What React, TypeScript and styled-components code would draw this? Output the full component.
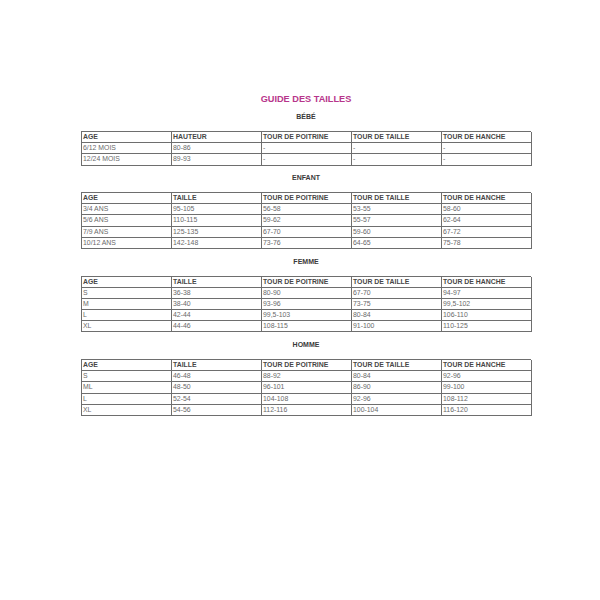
import React from "react";
import styled, { createGlobalStyle } from "styled-components";

const GlobalStyle = createGlobalStyle`
  html, body {
    margin: 0;
    padding: 0;
    background: #ffffff;
  }
  body {
    font-family: "Liberation Sans", Arial, sans-serif;
  }
`;

const Page = styled.main`
  width: 450px;
  margin-left: 81px;
  padding-top: 92px;
  display: flex;
  flex-direction: column;
  gap: 6.5px;
`;

const Title = styled.h1`
  margin: 0 0 -1.5px;
  height: 14px;
  line-height: 14px;
  font-size: 9.2px;
  font-weight: bold;
  text-align: center;
  color: #b7358b;
`;

const Section = styled.section`
  display: flex;
  flex-direction: column;
  gap: 8px;
`;

const Label = styled.h2`
  margin: 0;
  height: 12px;
  line-height: 12px;
  font-size: 7px;
  font-weight: bold;
  text-align: center;
  color: #3a3a3a;
`;

const Grid = styled.div`
  display: grid;
  grid-template-columns: repeat(5, 90px);
  grid-auto-rows: 11.2px;
  border-top: 1px solid #6e6e6e;
  border-left: 1px solid #6e6e6e;
`;

const Cell = styled.div<{ $head?: boolean }>`
  box-sizing: border-box;
  border-right: 1px solid #6e6e6e;
  border-bottom: 1px solid #6e6e6e;
  padding: 0 1px;
  font-size: 6.9px;
  line-height: 10.2px;
  white-space: nowrap;
  overflow: hidden;
  font-weight: ${(p) => (p.$head ? "bold" : "normal")};
  color: ${(p) => (p.$head ? "#474747" : "#6a6a6a")};
`;

type Table = { title: string; first: string; rows: string[][] };

const tables: Table[] = [
  {
    title: "BÉBÉ",
    first: "HAUTEUR",
    rows: [
      ["6/12 MOIS", "80-86", "-", "-", "-"],
      ["12/24 MOIS", "89-93", "-", "-", "-"],
    ],
  },
  {
    title: "ENFANT",
    first: "TAILLE",
    rows: [
      ["3/4 ANS", "95-105", "56-58", "53-55", "58-60"],
      ["5/6 ANS", "110-115", "59-62", "55-57", "62-64"],
      ["7/9 ANS", "125-135", "67-70", "59-60", "67-72"],
      ["10/12 ANS", "142-148", "73-76", "64-65", "75-78"],
    ],
  },
  {
    title: "FEMME",
    first: "TAILLE",
    rows: [
      ["S", "36-38", "80-90", "67-70", "94-97"],
      ["M", "38-40", "93-96", "73-75", "99,5-102"],
      ["L", "42-44", "99,5-103", "80-84", "106-110"],
      ["XL", "44-46", "108-115", "91-100", "110-125"],
    ],
  },
  {
    title: "HOMME",
    first: "TAILLE",
    rows: [
      ["S", "46-48", "88-92", "80-84", "92-96"],
      ["ML", "48-50", "96-101", "86-90", "99-100"],
      ["L", "52-54", "104-108", "92-96", "108-112"],
      ["XL", "54-56", "112-116", "100-104", "116-120"],
    ],
  },
];

export default function App() {
  return (
    <>
      <GlobalStyle />
      <Page>
        <Title>GUIDE DES TAILLES</Title>
        {tables.map((t) => {
          const head = ["AGE", t.first, "TOUR DE POITRINE", "TOUR DE TAILLE", "TOUR DE HANCHE"];
          return (
            <Section key={t.title}>
              <Label>{t.title}</Label>
              <Grid>
                {head.map((h) => (
                  <Cell $head key={h}>
                    {h}
                  </Cell>
                ))}
                {t.rows.map((row, i) =>
                  row.map((v, j) => <Cell key={i + "-" + j}>{v}</Cell>)
                )}
              </Grid>
            </Section>
          );
        })}
      </Page>
    </>
  );
}
